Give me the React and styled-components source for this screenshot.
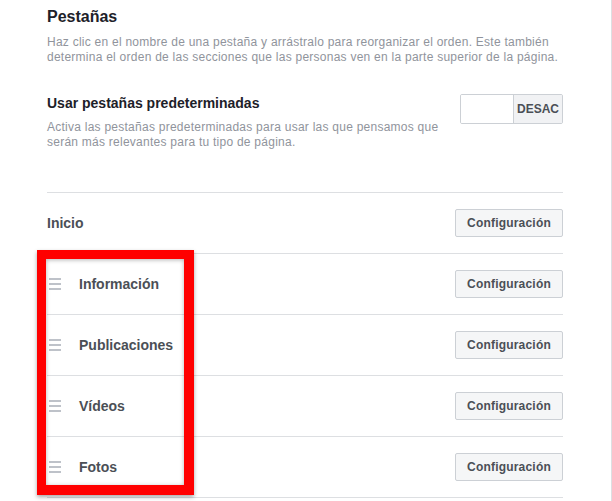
import React from "react";
import styled, { createGlobalStyle } from "styled-components";

const Global = createGlobalStyle`
  body {
    margin: 0;
    background: #fff;
    font-family: "Liberation Sans", Arial, sans-serif;
  }
`;

const Page = styled.div`
  position: relative;
  width: 612px;
  height: 501px;
  overflow: hidden;
  border-right: 1px solid #dddfe2;
  box-sizing: border-box;
  padding: 7px 48px 0 47px;
  background: #fff;
`;

const Title = styled.div`
  font-size: 16px;
  line-height: 20px;
  font-weight: bold;
  color: #1d2129;
`;

const Desc = styled.div`
  font-size: 12px;
  line-height: 15px;
  letter-spacing: 0.25px;
  color: #90949c;
  margin-top: ${(p) => p.$mt || 8}px;
`;

const SettingRow = styled.div`
  display: flex;
  justify-content: space-between;
  align-items: flex-start;
  margin-top: 29px;
`;

const SettingTitle = styled.div`
  font-size: 14px;
  line-height: 18px;
  font-weight: bold;
  color: #1d2129;
`;

const Toggle = styled.div`
  display: flex;
  width: 103px;
  height: 30px;
  box-sizing: border-box;
  border: 1px solid #ccd0d5;
  border-radius: 2px;
  overflow: hidden;
`;

const ToggleBlank = styled.div`
  width: 52px;
  background: #fff;
  border-right: 1px solid #ccd0d5;
`;

const ToggleLabel = styled.div`
  flex: 1;
  display: flex;
  align-items: center;
  justify-content: center;
  background: #f1f2f4;
  font-size: 12px;
  font-weight: bold;
  color: #4b4f56;
`;

const TabList = styled.div`
  margin-top: 42px;
  border-top: 1px solid #dddfe2;
`;

const TabRow = styled.div`
  display: flex;
  align-items: center;
  height: 60px;
  border-bottom: 1px solid #dddfe2;
`;

const Handle = styled.div`
  display: flex;
  flex-direction: column;
  gap: 3px;
  width: 12px;
  margin: 0 18px 0 2px;
  span {
    display: block;
    height: 2px;
    background: #bec2c9;
  }
`;

const TabName = styled.div`
  flex: 1;
  font-size: 14px;
  font-weight: bold;
  color: #4b4f56;
`;

const Button = styled.button`
  width: 108px;
  height: 28px;
  box-sizing: border-box;
  border: 1px solid #ccd0d5;
  border-radius: 2px;
  background: #f5f6f7;
  font-family: "Liberation Sans", Arial, sans-serif;
  font-size: 12px;
  font-weight: bold;
  letter-spacing: 0.2px;
  color: #4b4f56;
  padding: 0;
`;

const Highlight = styled.div`
  position: absolute;
  left: 37px;
  top: 250px;
  width: 157px;
  height: 245px;
  box-sizing: border-box;
  border: 9px solid #ff0000;
  border-right-width: 10px;
  border-bottom-width: 10px;
  box-shadow: 0 2px 4px rgba(0, 0, 0, 0.35), inset 0 1px 4px rgba(0, 0, 0, 0.3);
  pointer-events: none;
`;

const tabs = [
  { name: "Inicio", fixed: true },
  { name: "Información" },
  { name: "Publicaciones" },
  { name: "Vídeos" },
  { name: "Fotos" },
];

export default function App() {
  return (
    <Page>
      <Global />
      <Title>Pestañas</Title>
      <Desc>
        Haz clic en el nombre de una pestaña y arrástralo para reorganizar el
        orden. Este también determina el orden de las secciones que las
        personas ven en la parte superior de la página.
      </Desc>
      <SettingRow>
        <div>
          <SettingTitle>Usar pestañas predeterminadas</SettingTitle>
          <Desc>
            Activa las pestañas predeterminadas para usar las que pensamos que
            <br />
            serán más relevantes para tu tipo de página.
          </Desc>
        </div>
        <Toggle>
          <ToggleBlank />
          <ToggleLabel>DESAC</ToggleLabel>
        </Toggle>
      </SettingRow>
      <TabList>
        {tabs.map((t) => (
          <TabRow key={t.name}>
            {!t.fixed && (
              <Handle>
                <span />
                <span />
                <span />
              </Handle>
            )}
            <TabName>{t.name}</TabName>
            <Button>Configuración</Button>
          </TabRow>
        ))}
      </TabList>
      <Highlight />
    </Page>
  );
}
